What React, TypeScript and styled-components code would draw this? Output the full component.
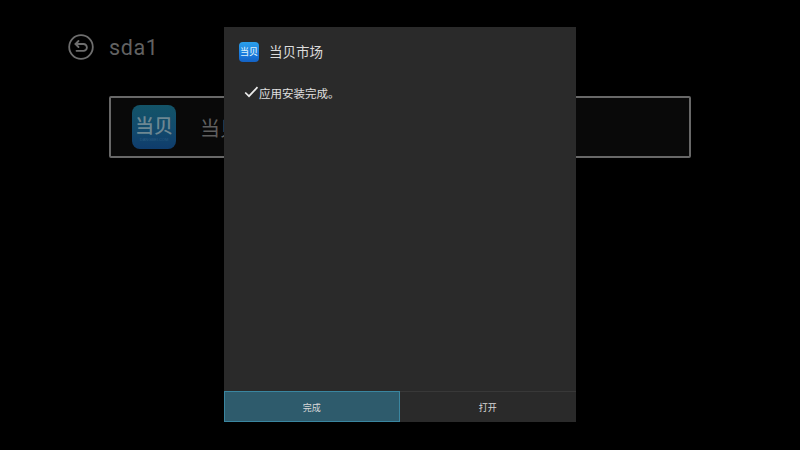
import React from "react";
import styled, { createGlobalStyle } from "styled-components";

const Global = createGlobalStyle`
  html, body { margin: 0; padding: 0; background: #000; }
  body { font-family: "Roboto", "Noto Sans CJK SC", sans-serif; }
  #root { width: 800px; height: 450px; overflow: hidden; }
`;

const Screen = styled.div`
  position: relative;
  width: 800px;
  height: 450px;
  overflow: hidden;
  background: #000;
`;

const Page = styled.div`
  display: flex;
  flex-direction: column;
  padding: 33px 109px 0;
`;

const PageHeader = styled.div`
  display: flex;
  align-items: center;
  gap: 15px;
  height: 28px;
  margin-left: -41px;
`;

const PageTitle = styled.span`
  font-family: "Roboto", sans-serif;
  font-size: 21.5px;
  color: #626262;
  letter-spacing: 0.6px;
`;

const FileRow = styled.div`
  display: flex;
  align-items: center;
  gap: 24px;
  box-sizing: border-box;
  width: 582px;
  height: 62px;
  margin-top: 35px;
  padding-left: 21px;
  border: 2px solid #686868;
  border-radius: 2px;
  background: #090909;
`;

const LargeIcon = styled.div`
  display: flex;
  flex-direction: column;
  align-items: center;
  justify-content: center;
  gap: 3px;
  width: 44px;
  height: 44px;
  border-radius: 8px;
  background: linear-gradient(180deg, #135468 0%, #124a6c 55%, #0f3c6c 100%);
  color: #6d8792;
  font-family: "Noto Sans CJK SC", sans-serif;
  font-weight: 500;
  line-height: 1;
  box-sizing: border-box;
`;

const LargeIconMark = styled.span`
  font-size: 19px;
  line-height: 20px;
  margin-top: 3px;
`;

const LargeIconCaption = styled.span`
  font-family: "Liberation Sans", sans-serif;
  font-size: 4px;
  line-height: 4px;
  color: #2a5a80;
`;

const FileName = styled.span`
  font-family: "Noto Sans CJK SC", sans-serif;
  font-size: 20px;
  color: #5f5f5f;
`;

const Dialog = styled.div`
  position: absolute;
  left: 224px;
  top: 27px;
  display: flex;
  flex-direction: column;
  width: 352px;
  height: 395px;
  background: #2a2a2a;
`;

const DialogHeader = styled.div`
  display: flex;
  align-items: center;
  gap: 10px;
  height: 49px;
  padding-left: 15px;
`;

const SmallIcon = styled.div`
  display: flex;
  align-items: center;
  justify-content: center;
  width: 20px;
  height: 20px;
  border-radius: 4px;
  background: linear-gradient(180deg, #2ba0ea 0%, #1a7ade 60%, #1462c4 100%);
  color: #d8eefa;
  font-family: "Noto Sans CJK SC", sans-serif;
  font-size: 9px;
  font-weight: 500;
  line-height: 1;
`;

const DialogTitle = styled.span`
  font-family: "Noto Sans CJK SC", sans-serif;
  font-size: 13.5px;
  line-height: 18px;
  margin-top: -1px;
  color: #dcdcdc;
`;

const DialogBody = styled.div`
  flex: 1;
  display: flex;
  align-items: flex-start;
  padding: 8px 0 0 20px;
`;

const StatusText = styled.span`
  font-family: "Noto Sans CJK SC", sans-serif;
  font-size: 11.5px;
  line-height: 18px;
  color: #e0e0e0;
`;

const ButtonBar = styled.div`
  display: flex;
  height: 31px;
  border-top: 1px solid #383838;
  box-sizing: border-box;
`;

const DialogButton = styled.div<{ $focused?: boolean }>`
  display: flex;
  align-items: center;
  justify-content: center;
  box-sizing: border-box;
  width: ${(p) => (p.$focused ? "175.5px" : "176.5px")};
  padding-top: ${(p) => (p.$focused ? "2px" : "1px")};
  font-family: "Noto Sans CJK SC", sans-serif;
  font-size: 9px;
  color: #d8d8d8;
  background: ${(p) => (p.$focused ? "#2e5b6c" : "transparent")};
  border: ${(p) => (p.$focused ? "1px solid #3a86a0" : "none")};
  margin-top: ${(p) => (p.$focused ? "-1px" : "0")};
`;

const BackIcon = () => (
  <svg width="26" height="26" viewBox="0 0 26 26" fill="none" stroke="#6e6e6e" strokeWidth="1.8" strokeLinecap="round" strokeLinejoin="round">
    <circle cx="13" cy="13" r="11.8" />
    <path d="M10.5 7 L7.5 10 L10.5 13" />
    <path d="M7.5 10 H15.5 A3.4 3.4 0 0 1 15.5 16.8 H8.5" />
  </svg>
);

const Check = () => (
  <svg width="15" height="18" viewBox="0 0 15 18" fill="none" stroke="#ececec" strokeWidth="1.7">
    <path d="M1.2 8.5 L5 12.2 L13.5 3.2" />
  </svg>
);

export default function App() {
  return (
    <Screen>
      <Global />
      <Page>
        <PageHeader>
          <BackIcon />
          <PageTitle>sda1</PageTitle>
        </PageHeader>
        <FileRow>
          <LargeIcon>
            <LargeIconMark>当贝</LargeIconMark>
            <LargeIconCaption>DANGBEI.COM</LargeIconCaption>
          </LargeIcon>
          <FileName>当贝市场</FileName>
        </FileRow>
      </Page>
      <Dialog>
        <DialogHeader>
          <SmallIcon>当贝</SmallIcon>
          <DialogTitle>当贝市场</DialogTitle>
        </DialogHeader>
        <DialogBody>
          <Check />
          <StatusText>应用安装完成。</StatusText>
        </DialogBody>
        <ButtonBar>
          <DialogButton $focused>完成</DialogButton>
          <DialogButton>打开</DialogButton>
        </ButtonBar>
      </Dialog>
    </Screen>
  );
}
